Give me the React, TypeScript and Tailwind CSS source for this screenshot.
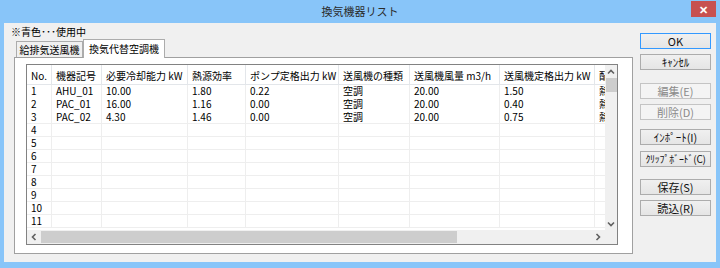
import React from "react";

const cols = [
  { label: "No.", w: "w-[25px]" },
  { label: "機器記号", w: "w-[50px]" },
  { label: "必要冷却能力 kW", w: "w-[86px]" },
  { label: "熱源効率", w: "w-[58px]" },
  { label: "ポンプ定格出力 kW", w: "w-[93px]" },
  { label: "送風機の種類", w: "w-[71px]" },
  { label: "送風機風量 m3/h", w: "w-[90px]" },
  { label: "送風機定格出力 kW", w: "w-[95px]" },
  { label: "配管", w: "w-[60px]" },
];

const data: string[][] = [
  ["1", "AHU_01", "10.00", "1.80", "0.22", "空調", "20.00", "1.50", "熱源"],
  ["2", "PAC_01", "16.00", "1.16", "0.00", "空調", "20.00", "0.40", "熱源"],
  ["3", "PAC_02", "4.30", "1.46", "0.00", "空調", "20.00", "0.75", "熱源"],
];

const emptyRows = ["4", "5", "6", "7", "8", "9", "10", "11"];

function Chevron({ dir }: { dir: "up" | "down" | "left" | "right" }) {
  const rot =
    dir === "up" ? 0 : dir === "right" ? 90 : dir === "down" ? 180 : 270;
  return (
    <svg width="8" height="8" viewBox="0 0 8 8" style={{ transform: `rotate(${rot}deg)` }}>
      <polyline points="1,5.5 4,2.5 7,5.5" fill="none" stroke="#606060" strokeWidth="1.6" />
    </svg>
  );
}

function Btn({
  label,
  mt,
  variant,
  size,
}: {
  label: string;
  mt: string;
  variant?: "default" | "disabled";
  size?: string;
}) {
  const base =
    "w-[71px] h-[16px] flex items-center justify-center leading-none border whitespace-nowrap overflow-hidden";
  let cls = "border-[#acacac] bg-gradient-to-b from-[#f0f0f0] to-[#e5e5e5] text-[#111]";
  if (variant === "default") cls = "border-[#3399ff] bg-gradient-to-b from-[#f0f0f0] to-[#e5e5e5] text-[#111]";
  if (variant === "disabled") cls = "border-[#c4c4c4] bg-[#f4f4f4] text-[#8a8a8a]";
  return <div className={`${base} ${cls} ${mt} ${size ?? "text-[11px]"}`}>{label}</div>;
}

export default function App() {
  return (
    <div
      className="w-[720px] h-[268px] bg-[#88c5f9] flex flex-col text-[#000]"
      style={{ fontFamily: "'Noto Sans CJK JP', 'Noto Sans', sans-serif" }}
    >
      {/* title bar */}
      <div className="h-[23px] flex items-start">
        <div className="w-[691px] h-[23px] flex items-center justify-center pl-[29px] text-[11px] text-[#2a2a2a]">
          換気機器リスト
        </div>
        <div className="w-[25px] h-[16px] mt-[1px] bg-[#c75050] flex items-center justify-center text-white text-[11px] font-bold leading-none">
          ✕
        </div>
      </div>

      {/* client */}
      <div className="mx-[4px] h-[239px] bg-[#f0f0f0] flex">
        {/* left column */}
        <div className="w-[629px] flex flex-col">
          <div className="h-[14px] mt-[2px] pl-[7px] text-[10px] leading-[14px]">※青色･･･使用中</div>
          <div className="h-[18px] ml-[12px] flex items-end relative z-10">
            <div className="w-[67px] h-[16px] border border-[#acacac] border-b-0 bg-[#f0f0f0] flex items-center justify-center text-[10px] leading-none">
              給排気送風機
            </div>
            <div className="w-[82px] h-[19px] -mb-px border border-[#acacac] border-b-0 bg-white flex items-center justify-center text-[10px] leading-none">
              換気代替空調機
            </div>
          </div>
          <div className="ml-[10px] w-[619px] h-[197px] border border-[#a0a0a0] bg-white pt-[6px] pl-[11px]">
            {/* grid */}
            <div className="w-[592px] h-[181px] border border-[#828282] flex flex-col">
              <div className="flex h-[165px]">
                <div className="w-[578px] overflow-hidden flex flex-col">
                  <div className="flex h-[20px] border-b border-[#e3e6ea] shrink-0">
                    {cols.map((c, i) => (
                      <div
                        key={i}
                        className={`${c.w} shrink-0 h-full border-r border-[#e3e6ea] pl-[4px] pt-[5px] text-[10px] leading-[12px] whitespace-nowrap`}
                      >
                        {c.label}
                      </div>
                    ))}
                  </div>
                  {data.map((r, ri) => (
                    <div key={ri} className={`flex h-[13px] shrink-0 ${ri === 2 ? "border-b border-[#eeeeee]" : ""}`}>
                      {r.map((v, ci) => (
                        <div
                          key={ci}
                          className={`${cols[ci].w} shrink-0 h-full border-r border-[#eeeeee] pl-[4px] text-[10px] leading-[12px] whitespace-nowrap`}
                        >
                          {v}
                        </div>
                      ))}
                    </div>
                  ))}
                  {emptyRows.map((n) => (
                    <div key={n} className="flex h-[13px] shrink-0 border-b border-[#eeeeee]">
                      {cols.map((c, ci) => (
                        <div
                          key={ci}
                          className={`${c.w} shrink-0 h-full border-r border-[#eeeeee] pl-[4px] text-[10px] leading-[12px] whitespace-nowrap`}
                        >
                          {ci === 0 ? n : ""}
                        </div>
                      ))}
                    </div>
                  ))}
                </div>
                {/* vertical scrollbar */}
                <div className="w-[12px] bg-[#f0f0f0] flex flex-col items-center">
                  <div className="h-[13px] flex items-center justify-center">
                    <Chevron dir="up" />
                  </div>
                  <div className="w-[11px] h-[14px] bg-[#cdcdcd]" />
                  <div className="flex-1" />
                  <div className="h-[13px] flex items-center justify-center">
                    <Chevron dir="down" />
                  </div>
                </div>
              </div>
              {/* horizontal scrollbar */}
              <div className="flex h-[14px]">
                <div className="w-[578px] bg-[#f0f0f0] flex items-center">
                  <div className="w-[14px] flex items-center justify-center">
                    <Chevron dir="left" />
                  </div>
                  <div className="w-[416px] h-[12px] bg-[#cdcdcd]" />
                  <div className="flex-1" />
                  <div className="w-[14px] flex items-center justify-center">
                    <Chevron dir="right" />
                  </div>
                </div>
                <div className="flex-1 bg-[#f0f0f0]" />
              </div>
            </div>
          </div>
        </div>

        {/* right column buttons */}
        <div className="ml-[7px] flex flex-col">
          <Btn label="OK" mt="mt-[10px]" variant="default" />
          <Btn label="ｷｬﾝｾﾙ" mt="mt-[5px]" />
          <Btn label="編集(E)" mt="mt-[13px]" variant="disabled" />
          <Btn label="削除(D)" mt="mt-[5px]" variant="disabled" />
          <Btn label="ｲﾝﾎﾟｰﾄ(I)" mt="mt-[9px]" />
          <Btn label="ｸﾘｯﾌﾟﾎﾞｰﾄﾞ(C)" mt="mt-[6px]" size="text-[10px] tracking-[-0.3px]" />
          <Btn label="保存(S)" mt="mt-[12px]" />
          <Btn label="読込(R)" mt="mt-[5px]" />
        </div>
      </div>
    </div>
  );
}
